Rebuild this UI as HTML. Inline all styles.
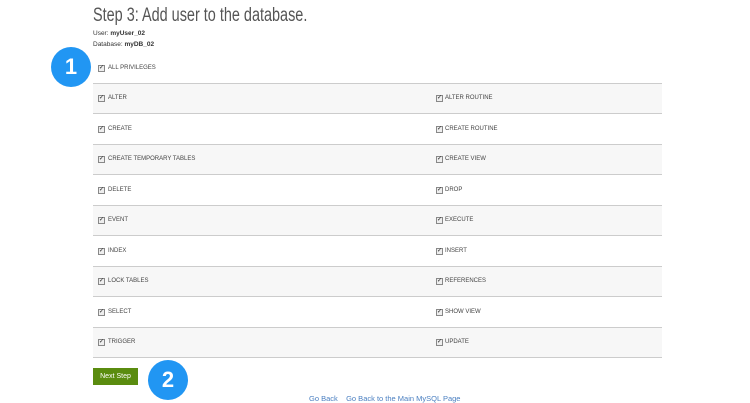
<!DOCTYPE html>
<html><head><style>
*{margin:0;padding:0;box-sizing:border-box}
body{width:750px;height:400px;background:#fff;font-family:"Liberation Sans",sans-serif;position:relative;overflow:hidden;color:#333}
h1{position:absolute;left:93px;top:5px;font-size:19px;font-weight:normal;color:#555;transform:scaleX(0.76);transform-origin:0 0;white-space:nowrap}
.meta{position:absolute;left:93px;font-size:6.5px;color:#333}
.meta b{font-weight:bold}
.row{position:absolute;left:93px;width:569px;height:31px}
.g{background:#f7f7f7}
.ln{position:absolute;left:93px;width:569px;height:1px;background:#ccc}
.cb{position:absolute;top:12px;width:7px;height:7px;border:1px solid #888;background:#eee;font-size:6px;line-height:5px;text-align:center;color:#222}
.lb{position:absolute;top:12px;font-size:6px;line-height:7px;color:#444;white-space:nowrap}
.circ{position:absolute;width:40px;height:40px;border-radius:50%;background:#2196f3;color:#fff;font-weight:bold;font-size:22px;text-align:center;line-height:40px}
.btn{position:absolute;left:93px;top:368px;width:45px;height:17px;background:#5a8c0f;color:#fff;font-size:7px;text-align:center;line-height:17px}
.links{position:absolute;left:309px;top:394px;font-size:7.5px;color:#4a7fc1}
</style></head><body>
<h1>Step 3: Add user to the database.</h1>
<div class="meta" style="top:30px">User: <b>myUser_02</b></div>
<div class="meta" style="top:41px">Database: <b>myDB_02</b></div>
<div class="circ" style="left:51px;top:47px">1</div>
<div class="row" style="top:53px"><span class="cb" style="left:5px">✓</span><span class="lb" style="left:15px">ALL PRIVILEGES</span></div>
<div class="row g" style="top:83px"><span class="cb" style="left:5px">✓</span><span class="lb" style="left:15px">ALTER</span><span class="cb" style="left:343px">✓</span><span class="lb" style="left:352px">ALTER ROUTINE</span></div>
<div class="row" style="top:114px"><span class="cb" style="left:5px">✓</span><span class="lb" style="left:15px">CREATE</span><span class="cb" style="left:343px">✓</span><span class="lb" style="left:352px">CREATE ROUTINE</span></div>
<div class="row g" style="top:144px"><span class="cb" style="left:5px">✓</span><span class="lb" style="left:15px">CREATE TEMPORARY TABLES</span><span class="cb" style="left:343px">✓</span><span class="lb" style="left:352px">CREATE VIEW</span></div>
<div class="row" style="top:175px"><span class="cb" style="left:5px">✓</span><span class="lb" style="left:15px">DELETE</span><span class="cb" style="left:343px">✓</span><span class="lb" style="left:352px">DROP</span></div>
<div class="row g" style="top:205px"><span class="cb" style="left:5px">✓</span><span class="lb" style="left:15px">EVENT</span><span class="cb" style="left:343px">✓</span><span class="lb" style="left:352px">EXECUTE</span></div>
<div class="row" style="top:236px"><span class="cb" style="left:5px">✓</span><span class="lb" style="left:15px">INDEX</span><span class="cb" style="left:343px">✓</span><span class="lb" style="left:352px">INSERT</span></div>
<div class="row g" style="top:266px"><span class="cb" style="left:5px">✓</span><span class="lb" style="left:15px">LOCK TABLES</span><span class="cb" style="left:343px">✓</span><span class="lb" style="left:352px">REFERENCES</span></div>
<div class="row" style="top:297px"><span class="cb" style="left:5px">✓</span><span class="lb" style="left:15px">SELECT</span><span class="cb" style="left:343px">✓</span><span class="lb" style="left:352px">SHOW VIEW</span></div>
<div class="row g" style="top:327px"><span class="cb" style="left:5px">✓</span><span class="lb" style="left:15px">TRIGGER</span><span class="cb" style="left:343px">✓</span><span class="lb" style="left:352px">UPDATE</span></div>
<div class="ln" style="top:83px"></div>
<div class="ln" style="top:113px"></div>
<div class="ln" style="top:144px"></div>
<div class="ln" style="top:174px"></div>
<div class="ln" style="top:205px"></div>
<div class="ln" style="top:235px"></div>
<div class="ln" style="top:266px"></div>
<div class="ln" style="top:296px"></div>
<div class="ln" style="top:327px"></div>
<div class="ln" style="top:357px"></div>
<div class="btn">Next Step</div>
<div class="circ" style="left:148px;top:360px">2</div>
<div class="links">Go Back &nbsp;&nbsp; Go Back to the Main MySQL Page</div>
</body></html>
